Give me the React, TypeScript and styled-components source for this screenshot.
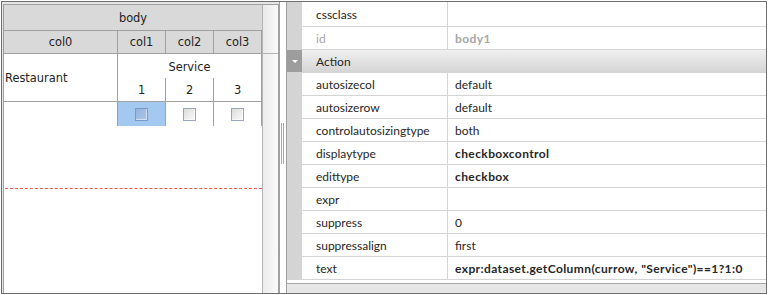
import React from 'react';
import styled, { createGlobalStyle } from 'styled-components';

const GlobalStyle = createGlobalStyle`
  html, body {
    margin: 0;
    padding: 0;
    background: #ffffff;
  }
  * {
    box-sizing: border-box;
  }
`;

// 外枠
const Frame = styled.div`
  margin: 1px;
  width: 766px;
  height: 293px;
  border: 1px solid #6e6e6e;
  display: flex;
  background: #ffffff;
`;

// 左側：グリッドデザイナー
const LeftPane = styled.div`
  width: 277px;
  padding: 2px 0 0 1px;
  background: #e6e6e6;
  display: flex;
`;

const GridBox = styled.div`
  flex: 1;
  display: flex;
  border: 1px solid #a0a0a0;
  border-bottom: none;
  background: #ffffff;
  font-family: "DejaVu Sans", Verdana, sans-serif;
  font-size: 11.4px;
  color: #222222;
`;

const GridMain = styled.div`
  width: 258px;
  display: flex;
  flex-direction: column;
`;

const HeadBand = styled.div`
  height: 26px;
  background: #d9d9d9;
  border-bottom: 1px solid #a0a0a0;
  display: flex;
  align-items: center;
  justify-content: center;
`;

const Columns = styled.div<{ $h: number }>`
  height: ${p => p.$h}px;
  display: grid;
  grid-template-columns: 114px 48px 48px 48px;
`;

const HeadCell = styled.div`
  background: #d9d9d9;
  border-right: 1px solid #a0a0a0;
  border-bottom: 1px solid #a0a0a0;
  display: flex;
  align-items: center;
  justify-content: center;
`;

const BodyBlock = styled.div`
  height: 48px;
  display: grid;
  grid-template-columns: 114px 48px 48px 48px;
  grid-template-rows: 24px 23px;
  border-bottom: 1px solid #a0a0a0;
`;

const RowLabel = styled.div`
  grid-row: 1 / span 2;
  border-right: 1px solid #a0a0a0;
  display: flex;
  align-items: center;
  padding-left: 1px;
`;

const MergedTitle = styled.div`
  grid-column: 2 / span 3;
  border-right: 1px solid #a0a0a0;
  display: flex;
  align-items: flex-end;
  justify-content: center;
  padding-bottom: 4px;
`;

const SubCell = styled.div`
  border-right: 1px solid #a0a0a0;
  display: flex;
  align-items: center;
  justify-content: center;
  padding-top: 1px;
`;

const DataCell = styled.div<{ $selected?: boolean }>`
  background: ${p => (p.$selected ? '#a3c9f1' : 'transparent')};
  border-right: 1px solid ${p => (p.$selected ? '#8aa9d2' : '#a0a0a0')};
  display: flex;
  align-items: center;
  justify-content: center;
`;

const CheckBox = styled.span<{ $selected?: boolean }>`
  width: 13px;
  height: 13px;
  border: 1px solid ${p => (p.$selected ? '#7f98c2' : '#9aa4c0')};
  background: ${p =>
    p.$selected
      ? 'linear-gradient(135deg, #94b4de, #aac8ec)'
      : 'linear-gradient(135deg, #dcdcdc, #fbfbfb)'};
  box-shadow: inset -1px -1px 0 rgba(255, 255, 255, 0.5);
`;

const EndMarker = styled.div`
  margin: 62px 0 0 1px;
  border-top: 1px dashed #e65a45;
`;

const ScrollCol = styled.div`
  width: 16px;
  border-left: 1px solid #b4b4b4;
  display: flex;
  flex-direction: column;
`;

const ScrollCorner = styled.div`
  height: 49px;
  border-bottom: 1px solid #b4b4b4;
  background: linear-gradient(to right, #e9e9e9, #f9f9f9);
`;

const ScrollTrack = styled.div`
  flex: 1;
  background: linear-gradient(to right, #ececec, #fafafa);
`;

// スプリッター
const Splitter = styled.div`
  width: 7px;
  background: #ffffff;
  border-left: 1px solid #a0a0a0;
  display: flex;
  align-items: flex-start;
  justify-content: center;
  padding-top: 121px;
`;

const Grip = styled.div`
  width: 3px;
  height: 41px;
  border-left: 1px solid #a8a8a8;
  border-right: 1px solid #a8a8a8;
  margin-left: -1px;
`;

// 右側：プロパティグリッド
const PropGrid = styled.div`
  flex: 1;
  border-left: 1px solid #a0a0a0;
  display: flex;
  flex-direction: column;
  font-family: "Lato", "Open Sans", sans-serif;
  font-size: 12px;
  color: #262626;
`;

const PropList = styled.div`
  flex: 1;
`;

const PropRow = styled.div<{ $first?: boolean }>`
  height: ${p => (p.$first ? 25 : 23)}px;
  display: grid;
  grid-template-columns: 15px 146px 1fr;
  border-bottom: 1px solid #d4d4d4;
`;

const Gutter = styled.div<{ $group?: boolean }>`
  background: ${p => (p.$group ? '#9d9d9d' : '#d4d4d4')};
  display: flex;
  align-items: center;
  justify-content: center;
`;

const NameCell = styled.div<{ $disabled?: boolean }>`
  border-right: 1px solid #d4d4d4;
  padding-left: 14px;
  display: flex;
  align-items: center;
  color: ${p => (p.$disabled ? '#a6a6a6' : '#262626')};
`;

const ValueCell = styled.div<{ $bold?: boolean; $disabled?: boolean }>`
  padding-left: 7px;
  display: flex;
  align-items: center;
  font-weight: ${p => (p.$bold ? 700 : 400)};
  letter-spacing: ${p => (p.$bold ? '0.4px' : '0')};
  color: ${p => (p.$disabled ? '#a6a6a6' : '#262626')};
  white-space: nowrap;
`;

const GroupCell = styled.div`
  grid-column: 2 / span 2;
  padding-left: 14px;
  display: flex;
  align-items: center;
  background: linear-gradient(to bottom, #f0f0f0, #d5d5d5);
`;

const Caret = styled.span`
  width: 0;
  height: 0;
  border-left: 3px solid transparent;
  border-right: 3px solid transparent;
  border-top: 3px solid #ffffff;
`;

const HScroll = styled.div`
  height: 10px;
  border-top: 1px solid #a8a8a8;
  background: #e6e6e6;
`;

type Prop = { name: string; value: string; bold?: boolean; disabled?: boolean };

const props_before: Prop[] = [
  { name: 'cssclass', value: '' },
  { name: 'id', value: 'body1', bold: true, disabled: true },
];

const props_action: Prop[] = [
  { name: 'autosizecol', value: 'default' },
  { name: 'autosizerow', value: 'default' },
  { name: 'controlautosizingtype', value: 'both' },
  { name: 'displaytype', value: 'checkboxcontrol', bold: true },
  { name: 'edittype', value: 'checkbox', bold: true },
  { name: 'expr', value: '' },
  { name: 'suppress', value: '0' },
  { name: 'suppressalign', value: 'first' },
  { name: 'text', value: 'expr:dataset.getColumn(currow, "Service")==1?1:0', bold: true },
];

const renderProp = (p: Prop, first = false) => (
  <PropRow key={p.name} $first={first}>
    <Gutter />
    <NameCell $disabled={p.disabled}>{p.name}</NameCell>
    <ValueCell $bold={p.bold} $disabled={p.disabled}>{p.value}</ValueCell>
  </PropRow>
);

const App: React.FC = () => {
  return (
    <>
      <GlobalStyle />
      <Frame>
        <LeftPane>
          <GridBox>
            <GridMain>
              <HeadBand>body</HeadBand>
              <Columns $h={23}>
                <HeadCell>col0</HeadCell>
                <HeadCell>col1</HeadCell>
                <HeadCell>col2</HeadCell>
                <HeadCell>col3</HeadCell>
              </Columns>
              <BodyBlock>
                <RowLabel>Restaurant</RowLabel>
                <MergedTitle>Service</MergedTitle>
                <SubCell>1</SubCell>
                <SubCell>2</SubCell>
                <SubCell>3</SubCell>
              </BodyBlock>
              <Columns $h={24}>
                <DataCell />
                <DataCell $selected>
                  <CheckBox $selected />
                </DataCell>
                <DataCell>
                  <CheckBox />
                </DataCell>
                <DataCell>
                  <CheckBox />
                </DataCell>
              </Columns>
              <EndMarker />
            </GridMain>
            <ScrollCol>
              <ScrollCorner />
              <ScrollTrack />
            </ScrollCol>
          </GridBox>
        </LeftPane>
        <Splitter>
          <Grip />
        </Splitter>
        <PropGrid>
          <PropList>
            {props_before.map((p, i) => renderProp(p, i === 0))}
            <PropRow>
              <Gutter $group>
                <Caret />
              </Gutter>
              <GroupCell>Action</GroupCell>
            </PropRow>
            {props_action.map(p => renderProp(p))}
          </PropList>
          <HScroll />
        </PropGrid>
      </Frame>
    </>
  );
};

export default App;
